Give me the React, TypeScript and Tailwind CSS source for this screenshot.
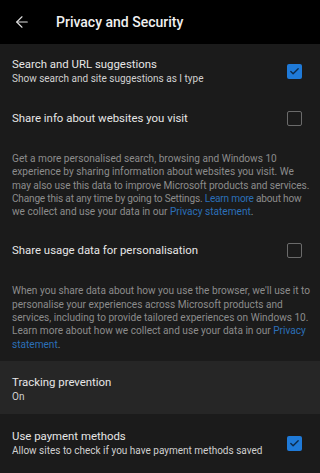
import { ArrowLeft, Check } from "lucide-react";

function Checkbox({ checked }: { checked: boolean }) {
  if (checked) {
    return (
      <div className="w-[15px] h-[15px] rounded-[2px] bg-[#1f7ad8] flex items-center justify-center shrink-0">
        <Check className="w-[11px] h-[11px] text-[#0d2a4a]" strokeWidth={3} />
      </div>
    );
  }
  return <div className="w-[15px] h-[15px] rounded-[2px] border-[1.5px] border-[#6b6b6b] shrink-0" />;
}

function Row({ title, sub, checked }: { title: string; sub?: string; checked: boolean }) {
  return (
    <div className="flex items-center justify-between pl-3 pr-[18px]">
      <div>
        <div className="text-[11.4px] leading-[15px] text-[#e6e6e6]">{title}</div>
        {sub && <div className="text-[10px] leading-[14px] text-[#d0d0d0]">{sub}</div>}
      </div>
      <Checkbox checked={checked} />
    </div>
  );
}

export default function App() {
  return (
    <div className="w-[320px] h-[473px] bg-[#1b1b1b] overflow-hidden" style={{ fontFamily: "Roboto, 'Liberation Sans', sans-serif" }}>
      <div className="h-[44px] bg-black flex items-center">
        <ArrowLeft className="ml-[13px] w-[18px] h-[18px] text-[#e0e0e0]" strokeWidth={1.5} />
        <div className="ml-[25px] text-[14px] font-medium text-[#f0f0f0]">Privacy and Security</div>
      </div>

      <div className="pt-[13px]">
        <Row title="Search and URL suggestions" sub="Show search and site suggestions as I type" checked />
      </div>

      <div className="pt-[25px]">
        <Row title="Share info about websites you visit" checked={false} />
        <p className="pl-3 pr-[2px] pt-[26px] text-[10.1px] leading-[13.3px] text-[#8c8c8c] whitespace-nowrap">
          Get a more personalised search, browsing and Windows 10
          <br />
          experience by sharing information about websites you visit. We
          <br />
          <span className="tracking-[-0.05px]">may also use this data to improve Microsoft products and services.</span>
          <br />
          <span className="tracking-[-0.2px]">
            Change this at any time by going to Settings. <span className="text-[#2b6fb8]">Learn more</span> about how
          </span>
          <br />
          we collect and use your data in our <span className="text-[#2b6fb8]">Privacy statement</span>.
        </p>
      </div>

      <div className="pt-[25px]">
        <Row title="Share usage data for personalisation" checked={false} />
        <p className="pl-3 pr-2 pt-[26px] text-[10.1px] leading-[13.3px] text-[#8c8c8c]">
          When you share data about how you use the browser, we'll use it to personalise your experiences across Microsoft products and services, including to provide tailored experiences on Windows 10. Learn more about how we collect and use your data in our{" "}
          <span className="text-[#2b6fb8]">Privacy statement</span>.
        </p>
      </div>

      <div className="mt-[10px] h-[53px] bg-[#262626] pt-[14px] pl-3">
        <div className="text-[11.4px] leading-[15px] text-[#e6e6e6]">Tracking prevention</div>
        <div className="text-[10px] leading-[14px] text-[#d0d0d0]">On</div>
      </div>

      <div className="pt-[15px]">
        <Row title="Use payment methods" sub="Allow sites to check if you have payment methods saved" checked />
      </div>
    </div>
  );
}
